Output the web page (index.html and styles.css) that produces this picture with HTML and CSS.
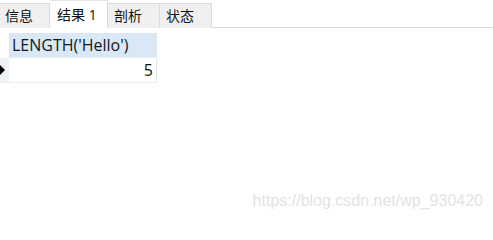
FILE: index.html
```html
<!DOCTYPE html>
<html lang="zh-CN">
<head>
<meta charset="utf-8">
<title>结果</title>
<link rel="stylesheet" href="styles.css">
</head>
<body>
<div class="page">
  <div class="tabbar">
    <div class="tab tab-first">信息</div>
    <div class="tab tab-active">结果 1</div>
    <div class="tab">剖析</div>
    <div class="tab">状态</div>
  </div>
  <div class="grid">
    <div class="corner"></div>
    <div class="head">LENGTH('Hello')</div>
    <div class="indicator"><svg width="6" height="10" viewBox="0 0 6 10"><path d="M0 0 L5 5 L0 10 Z" fill="#000"/></svg></div>
    <div class="cell num">5</div>
  </div>
  <div class="watermark">https://blog.csdn.net/wp_930420</div>
</div>
</body>
</html>
```
FILE: styles.css
```css
html, body {
  margin: 0;
  padding: 0;
  background: #ffffff;
}
.page {
  position: relative;
  width: 493px;
  height: 218px;
  font-family: "Open Sans", "Noto Sans CJK SC", sans-serif;
  color: #111;
  overflow: hidden;
}
.tabbar {
  display: flex;
  align-items: flex-end;
  height: 27px;
  border-bottom: 1px solid #dadada;
}
.tab {
  box-sizing: border-box;
  height: 25px;
  width: 52px;
  padding: 0 0 0 6px;
  margin-bottom: -1px;
  background: #f0f0f0;
  border: 1px solid #dadada;
  border-bottom: none;
  border-left: none;
  font-size: 14px;
  line-height: 24px;
  white-space: nowrap;
}
.tab-first {
  width: 50px;
  padding-left: 5px;
}
.tab-active {
  width: 58px;
  height: 28px;
  background: #ffffff;
  padding-left: 7px;
  line-height: 28px;
  border-top-color: #e6e6e6;
}
.grid {
  display: grid;
  grid-template-columns: 9px 148px;
  grid-template-rows: 25px 25px;
  margin-top: 5px;
}
.corner {
  background: #ffffff;
}
.head {
  box-sizing: border-box;
  background: #dae8f6;
  border-bottom: 1px solid #e8eef5;
  padding-left: 3px;
  font-size: 16px;
  line-height: 25px;
  color: #101820;
  white-space: nowrap;
}
.indicator {
  box-sizing: border-box;
  background: #eef2f7;
  display: flex;
  align-items: center;
  border-bottom: 1px solid #eeeeee;
}
.cell {
  box-sizing: border-box;
  border-right: 1px solid #e6e6e6;
  border-bottom: 1px solid #eeeeee;
  font-size: 16px;
  line-height: 25px;
}
.num {
  text-align: right;
  padding-right: 3px;
}
.watermark {
  position: absolute;
  right: 10px;
  bottom: 8px;
  font-family: "Liberation Sans", Arial, sans-serif;
  font-size: 16px;
  color: #e3e3e3;
}
```
